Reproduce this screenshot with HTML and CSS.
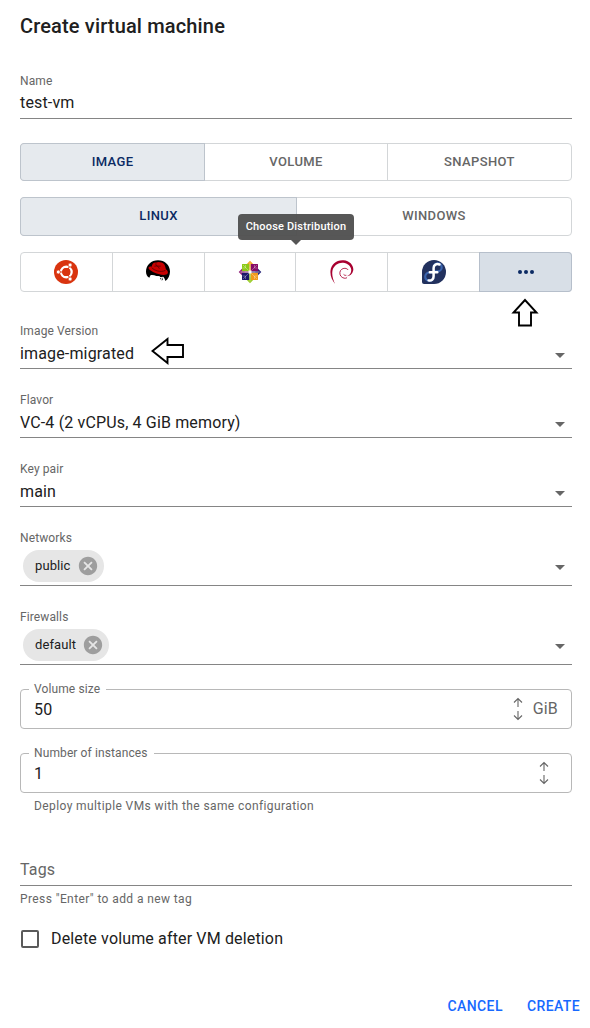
FILE: index.html
```html
<!DOCTYPE html>
<html lang="en">
<head>
<meta charset="utf-8">
<title>Create virtual machine</title>
<link rel="stylesheet" href="styles.css">
</head>
<body>
<main class="dialog">
  <h1 class="title">Create virtual machine</h1>

  <div class="field name-field"><label class="label">Name</label><div class="value">test-vm</div></div>

  <div class="group source">
    <button class="seg selected">IMAGE</button><button class="seg">VOLUME</button><button class="seg">SNAPSHOT</button>
  </div>
  <div class="group family">
    <button class="seg selected">LINUX</button><button class="seg">WINDOWS</button>
    <div class="tooltip">Choose Distribution</div>
  </div>
  <div class="group distro">
    <button class="seg" aria-label="Ubuntu"><svg width="24" height="24" viewBox="0 0 24 24"><circle cx="12" cy="12" r="12" fill="#d9340f"/><circle cx="12.3" cy="12" r="5.3" fill="none" stroke="#fff" stroke-width="2.4"/><g stroke="#d9340f" stroke-width="1"><path d="M12.3 12H4M12.3 12l4.3 7.4M12.3 12l4.3-7.4"/></g><circle cx="12.3" cy="12" r="4" fill="#d9340f"/><g fill="#fff" stroke="#d9340f" stroke-width=".7"><circle cx="4.3" cy="12" r="2"/><circle cx="16.1" cy="5" r="2"/><circle cx="16.1" cy="19" r="2"/></g></svg></button>
    <button class="seg" aria-label="Red Hat"><svg width="24" height="24" viewBox="0 0 24 24"><path d="M0 11.500C0 4.800 5.400.2 12 .2S24 5 24 11.500c0 4-1.700 7.300-4.500 9.500-.6-1.300-1-3.200-2.300-4.200-1.500.8-3.200.4-4.200-.5-2.800.4-5.300-1.500-7.800-1.100-.9.200-1.300 1.200-1.800 2.500C1 17 0 14 0 11.500z" fill="#000"/><path d="M4.600 15.200c2.400-.6 5.300 1.500 8.600 1 .8 1 2.600 1.100 3.500.5l2.200 5.300H5z" fill="#fff"/><path d="M14.100 17.800l1 .3-.5 1.800zM15.900 16.800l1 2.600-1.200 1.300z" fill="#111"/><path d="M2.400 7.800c.6-1.100 2-1.400 3.200-1.100C6.200 3.500 8.100 2 10.200 2.600c1.700-1.200 6.300-.6 8 1.700 1 1.400 1.300 3.300 1.700 5 1.800 1.300 2.600 3 1.700 4.300-1.200 1.900-5.100 1.800-9 .5C7.300 12.400 2.500 10 2.400 7.800z" fill="#c80000"/><path d="M5.700 7.600c2.500 3 9 5.100 13.700 2.800M8.400 6.200c2.600-.6 4.200.3 6.300-.1M10 3.300c-1 2.600 2.900 2.900 3.300 5.400" fill="none" stroke="#510000" stroke-width=".8"/></svg></button>
    <button class="seg centos" aria-label="CentOS"><svg width="24" height="24" viewBox="0 0 24 24"><g><path d="M12 .7l3.200 3.200L12 7.100 8.800 3.900z" fill="#efa724"/><path d="M23.300 12l-3.200 3.200-3.200-3.200 3.200-3.200z" fill="#262577"/><path d="M12 16.900l3.200 3.200-3.200 3.200-3.200-3.200z" fill="#9ccd2a"/><path d="M.7 12l3.200-3.200L7.100 12l-3.200 3.200z" fill="#932279"/></g><path d="M4 4h7.500v7.500H4z" fill="#8cc916"/><path d="M12.500 4H20v7.500h-7.500z" fill="#850a66"/><path d="M4 12.500h7.500V20H4z" fill="#1c176a"/><path d="M12.500 12.500H20V20h-7.500z" fill="#f19b1b"/><path d="M12 2.500V12" stroke="#efbb60" stroke-width="1.500"/><path d="M12 12v9.500" stroke="#a9d352" stroke-width="1.500"/><path d="M2.500 12H12" stroke="#ba7baf" stroke-width="1.500"/><path d="M12 12h9.500" stroke="#7776aa" stroke-width="1.500"/><path d="M4.800 4.800l14.400 14.400M19.200 4.800L4.800 19.200M7.500 5v3h-3M16.500 5v3h3M7.500 19v-3h-3M16.500 19v-3h3" fill="none" stroke="#fff" stroke-opacity=".5" stroke-width=".6"/><path d="M12 10l2 2-2 2-2-2z" fill="#fff"/></svg></button>
    <button class="seg" aria-label="Debian"><svg width="24" height="24" viewBox="0 0 24 24"><path d="M5.100 24C2 20 0 15.600.5 10.600 1.200 4.400 6.500-.4 13.600.2c6.500.5 10.500 5.700 9.600 10.400-.8 3.900-3.600 5.800-6.400 5.700 3.100-1 4.700-3.400 4.400-6.700-.3-3.500-3.700-6.500-8-6.900C8.500 2.200 3.800 5.600 2.600 9.900c-1 4.300.1 9 2.500 14.100z" fill="#a80030"/><path d="M16.300 15.300c-1.100.2-2-.1-2.700-.9M17 17.700c-.9.500-1.900.7-2.800.5-3-.6-4.700-3.100-4.300-5.900.4-2.500 2.500-4 5-4 1.600.1 2.500.7 3.300 1.700" fill="none" stroke="#a80030" stroke-width=".85"/></svg></button>
    <button class="seg" aria-label="Fedora"><svg width="24" height="24" viewBox="0 0 24 24"><path d="M12 0a12 12 0 1 1 0 24H2a2 2 0 0 1-2-2V12A12 12 0 0 1 12 0z" fill="#22315e"/><path d="M11.500 11.300h4.600a4 4 0 1 0-4.400-4M11.500 12.500H7.700a4.200 4.200 0 1 0 3.900 4.200" fill="none" stroke="#3963ad" stroke-width="2.200"/><path d="M17.500 4.500c-3-1.300-5.900.3-5.900 3.400v8.300c0 3.100-2.200 4.900-5 4.200M7.800 12.200h7.500" fill="none" stroke="#fff" stroke-width="2.500" stroke-linecap="round"/></svg></button>
    <button class="seg more" aria-label="Other"><svg width="24" height="24" viewBox="0 0 24 24" fill="#0b2a63"><circle cx="6" cy="12" r="2"/><circle cx="12" cy="12" r="2"/><circle cx="18" cy="12" r="2"/></svg><svg class="pointer-up" width="28" height="30" viewBox="0 0 28 30"><path d="M14 2L2.500 14.500H8V27.500H20V14.500H25.500z" fill="#fff" stroke="#000" stroke-width="1.900"/></svg></button>
  </div>

  <div class="field select version-field"><label class="label">Image Version</label><div class="value">image-migrated<svg class="pointer-left" width="34" height="28" viewBox="0 0 34 28"><path d="M1.500 14L16.500 2V8H32V20H16.500V26z" fill="#fff" stroke="#000" stroke-width="1.900"/></svg><i class="caret"></i></div></div>
  <div class="field select spaced"><label class="label">Flavor</label><div class="value">VC-4 (2 vCPUs, 4 GiB memory)<i class="caret"></i></div></div>
  <div class="field select spaced"><label class="label">Key pair</label><div class="value">main<i class="caret"></i></div></div>
  <div class="field spaced"><label class="label">Networks</label><div class="value chips"><span class="chip">public<svg width="22" height="22" viewBox="0 0 24 24"><path d="M12 2C6.470 2 2 6.470 2 12s4.470 10 10 10 10-4.470 10-10S17.530 2 12 2zm5 13.590L15.590 17 12 13.410 8.410 17 7 15.590 10.590 12 7 8.410 8.410 7 12 10.590 15.590 7 17 8.410 13.410 12 17 15.590z" fill="#9e9e9e"/></svg></span><i class="caret"></i></div></div>
  <div class="field spaced"><label class="label">Firewalls</label><div class="value chips"><span class="chip">default<svg width="22" height="22" viewBox="0 0 24 24"><path d="M12 2C6.470 2 2 6.470 2 12s4.470 10 10 10 10-4.470 10-10S17.530 2 12 2zm5 13.590L15.590 17 12 13.410 8.410 17 7 15.590 10.590 12 7 8.410 8.410 7 12 10.590 15.590 7 17 8.410 13.410 12 17 15.590z" fill="#9e9e9e"/></svg></span><i class="caret"></i></div></div>

  <div class="outlined"><label class="notch">Volume size</label><span class="number">50</span><svg class="stepper" width="10" height="24" viewBox="0 0 10 24"><path d="M5 1.500V10M1 5.500l4-4 4 4M5 14v8.500M1 18.500l4 4 4-4" fill="none" stroke="#666" stroke-width="1.100"/></svg><span class="unit">GiB</span></div>
  <div class="outlined count"><label class="notch">Number of instances</label><span class="number">1</span><svg class="stepper" width="10" height="24" viewBox="0 0 10 24"><path d="M5 1.500V10M1 5.500l4-4 4 4M5 14v8.500M1 18.500l4 4 4-4" fill="none" stroke="#666" stroke-width="1.100"/></svg></div>
  <p class="helper indented">Deploy multiple VMs with the same configuration</p>

  <div class="tags">Tags</div>
  <p class="helper">Press "Enter" to add a new tag</p>

  <div class="check"><span class="box"></span><span>Delete volume after VM deletion</span></div>
  <footer class="actions"><button class="action cancel">CANCEL</button><button class="action create">CREATE</button></footer>
</main>
</body>
</html>
```

FILE: styles.css
```css
* { box-sizing: border-box; }
body { margin: 0; background: #fff; font: 16px/24px Roboto, sans-serif; color: #202020; }
button { font: inherit; border: 0; padding: 0; margin: 0; background: none; }
p { margin: 0; }
svg { display: block; flex: none; }
.dialog { width: 590px; height: 1028px; padding: 10px 18px 0 20px; display: flex; flex-direction: column; white-space: nowrap; overflow: hidden; }
.title { margin: 0 0 29px; font-size: 20px; font-weight: 500; line-height: 32px; letter-spacing: .15px; }

.field { display: flex; flex-direction: column; border-bottom: 1px solid #858585; }
.label { font-size: 12px; line-height: 19px; height: 19px; padding-top: 1px; letter-spacing: .11px; color: #666; }
.value { height: 28px; line-height: 26px; letter-spacing: .15px; display: flex; }
.select .value { padding-top: 1px; }
.spaced { margin-top: 21px; }
.version-field { margin-top: 29px; }
.caret { margin: 12px 7px 0 auto; width: 0; height: 0; border: 5px solid transparent; border-top-color: #666; border-bottom: 0; }
.pointer-left { margin: -4px 0 0 17px; }

.group { display: grid; border: 1px solid #d3d6d8; border-radius: 4px; position: relative; }
.seg { display: flex; align-items: center; justify-content: center; font-size: 13px; font-weight: 500; letter-spacing: .37px; color: #666; border-right: 1px solid #d3d6d8; position: relative; }
.seg:nth-of-type(1) { border-radius: 3px 0 0 3px; }
.seg:last-of-type { border-right: 0; }
.selected { background: #e6eaee; color: #0b2a63; border-right-color: #bdc4cc; box-shadow: 0 -1px #bdc4cc, 0 1px #bdc4cc, -1px 0 #bdc4cc; }
.source { margin-top: 24px; height: 38px; grid-template-columns: 184px 183px 1fr; }
.family { margin-top: 16px; height: 39px; grid-template-columns: 276px 1fr; }
.family .seg { padding-bottom: 1px; }
.distro { margin-top: 16px; height: 40px; grid-template-columns: 92px 92px 91px 92px 92px 1fr; }
.distro .seg:nth-child(-n+2) { padding-right: 2px; }
.more { background: #d8dfe7; border-radius: 0 3px 3px 0; box-shadow: 0 0 0 1px #b6bfcb; }
.pointer-up { position: absolute; left: 31px; top: 45px; }
.tooltip { position: absolute; left: 217px; top: 16px; width: 116px; height: 26px; border-radius: 4px; background: rgba(80,80,80,.96); color: #fff; font-size: 11px; font-weight: 500; line-height: 25px; letter-spacing: .18px; text-align: center; z-index: 2; }
.tooltip::after { content: ""; position: absolute; top: 26px; left: 53px; border: 5px solid transparent; border-top-color: #555; border-bottom: 0; }

.chips { height: 38px; padding-left: 3px; }
.chips .caret { margin-top: 18px; }
.chip { display: flex; align-items: center; gap: 6px; height: 32px; line-height: 28px; margin-top: 3px; padding: 0 5px 0 12px; border-radius: 16px; background: #e6e6e6; font-size: 13px; letter-spacing: .1px; }

.outlined { margin-top: 24px; height: 40px; border: 1px solid #b8b8b8; border-radius: 4px; display: flex; align-items: center; padding: 0 13px; position: relative; }
.notch { position: absolute; left: 8px; top: -10px; padding: 0 6px 0 5px; background: #fff; font-size: 12px; line-height: 18px; letter-spacing: .11px; color: #666; }
.number { flex: 1; padding-top: 2px; letter-spacing: .15px; }
.stepper { margin-right: 9.5px; }
.count .stepper { margin-right: 9.5px; }
.unit { color: #666; letter-spacing: .15px; }
.helper { font-size: 12px; line-height: 20px; letter-spacing: .4px; color: #666; margin-top: 3px; }
.indented { padding-left: 14px; }
.tags { margin-top: 41px; height: 29px; line-height: 26px; letter-spacing: .15px; color: #666; border-bottom: 1px solid #858585; }
.check { margin-top: 17px; height: 26px; display: flex; align-items: center; gap: 12px; padding-left: 1px; letter-spacing: .15px; }
.box { width: 18px; height: 18px; border: 2px solid #5a5a5a; border-radius: 2px; }
.actions { margin-top: 42px; margin-right: -8px; display: flex; justify-content: flex-end; gap: 24px; }
.action { color: #1769ff; font-size: 14px; font-weight: 500; letter-spacing: .4px; }
```
